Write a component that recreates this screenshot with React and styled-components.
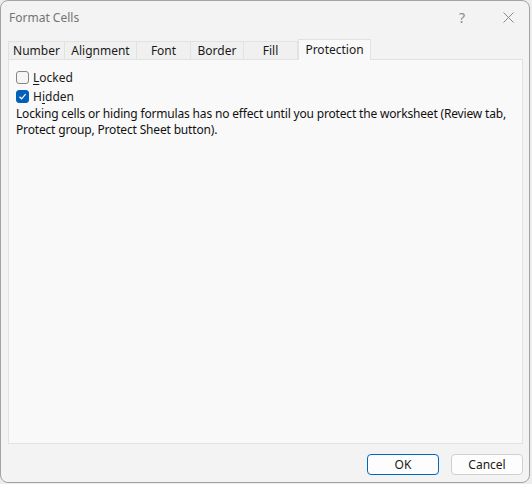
import React from "react";
import styled, { createGlobalStyle } from "styled-components";

const Global = createGlobalStyle`
  html, body { margin: 0; padding: 0; background: #ededed; }
  body { font-family: "Noto Sans", "Segoe UI", sans-serif; font-size: 12px; color: #1b1b1b; }
  * { box-sizing: border-box; }
`;

const Window = styled.div`
  width: 530px;
  height: 483px;
  border: 1px solid #a3a3a3;
  border-radius: 8px;
  background: #f3f3f3;
  display: flex;
  flex-direction: column;
  overflow: hidden;
`;

const TitleBar = styled.div`
  height: 32px;
  display: flex;
  align-items: center;
  padding-left: 8px;
`;

const Title = styled.div`
  flex: 1;
  color: #737373;
  font-size: 12px;
`;

const TitleButton = styled.div`
  width: ${(p) => p.$w}px;
  height: 32px;
  display: flex;
  align-items: center;
  justify-content: center;
  color: #8a8a8a;
  font-size: 14px;
`;

const Body = styled.div`
  flex: 1;
  display: flex;
  flex-direction: column;
  padding: 7px 6px 0 7px;
`;

const TabStrip = styled.div`
  display: flex;
  align-items: flex-end;
  height: 20px;
  position: relative;
  z-index: 1;
  margin-bottom: -1px;
`;

const Tab = styled.div`
  width: ${(p) => p.$w}px;
  height: ${(p) => (p.$active ? 21 : 19)}px;
  display: flex;
  align-items: center;
  justify-content: center;
  padding-bottom: ${(p) => (p.$active ? 2 : 0)}px;
  background: ${(p) => (p.$active ? "#f9f9f9" : "#f0f0f0")};
  border: 1px solid #e2e2e2;
  border-bottom: ${(p) => (p.$active ? "none" : "1px solid #e2e2e2")};
  border-left: ${(p) => (p.$first || p.$active ? "1px solid #e2e2e2" : "none")};
  color: #1a1a1a;
  font-size: 12px;
`;

const Panel = styled.div`
  height: 385px;
  background: #f9f9f9;
  border: 1px solid #e2e2e2;
  padding: 8px 7px;
  display: flex;
  flex-direction: column;
`;

const CheckRow = styled.label`
  display: flex;
  align-items: center;
  gap: 4px;
  height: 19px;
`;

const Box = styled.span`
  width: 13px;
  height: 13px;
  border-radius: 3px;
  border: 1px solid ${(p) => (p.$checked ? "#005fb8" : "#858585")};
  background: ${(p) => (p.$checked ? "#005fb8" : "#f5f5f5")};
  display: flex;
  align-items: center;
  justify-content: center;
`;

const Under = styled.span`
  text-decoration: underline;
  text-underline-offset: 2px;
`;

const Note = styled.p`
  margin: 0;
  line-height: 16px;
  font-size: 12px;
  letter-spacing: -0.17px;
  color: #111;
`;

const Footer = styled.div`
  display: flex;
  justify-content: flex-end;
  gap: 12px;
  padding-top: 10px;
`;

const Button = styled.div`
  width: 72px;
  height: 21px;
  border-radius: 4px;
  background: #fdfdfd;
  border: 1px solid ${(p) => (p.$primary ? "#0067c0" : "#d0d0d0")};
  display: flex;
  align-items: center;
  justify-content: center;
  font-size: 12px;
  color: #1a1a1a;
`;

const tabs = [
  ["Number", 57],
  ["Alignment", 72],
  ["Font", 54],
  ["Border", 53],
  ["Fill", 54],
  ["Protection", 73],
];

export default function App() {
  return (
    <>
      <Global />
      <Window>
        <TitleBar>
          <Title>Format Cells</Title>
          <TitleButton $w={50}>?</TitleButton>
          <TitleButton $w={42}>
            <svg width="11" height="11" viewBox="0 0 11 11">
              <path d="M0.5 0.5 L10.5 10.5 M10.5 0.5 L0.5 10.5" stroke="#8a8a8a" strokeWidth="1" />
            </svg>
          </TitleButton>
        </TitleBar>
        <Body>
          <TabStrip>
            {tabs.map(([t, w], i) => (
              <Tab key={t} $w={w} $first={i === 0} $active={t === "Protection"}>
                {t}
              </Tab>
            ))}
          </TabStrip>
          <Panel>
            <CheckRow>
              <Box />
              <span>
                <Under>L</Under>ocked
              </span>
            </CheckRow>
            <CheckRow>
              <Box $checked>
                <svg width="9" height="9" viewBox="0 0 9 9">
                  <path d="M1.5 4.8 L3.6 6.8 L7.6 2.2" stroke="#fff" strokeWidth="1.2" fill="none" />
                </svg>
              </Box>
              <span>
                H<Under>i</Under>dden
              </span>
            </CheckRow>
            <Note>
              Locking cells or hiding formulas has no effect until you protect the worksheet (Review tab,
              <br />
              Protect group, Protect Sheet button).
            </Note>
          </Panel>
          <Footer>
            <Button $primary>OK</Button>
            <Button>Cancel</Button>
          </Footer>
        </Body>
      </Window>
    </>
  );
}
